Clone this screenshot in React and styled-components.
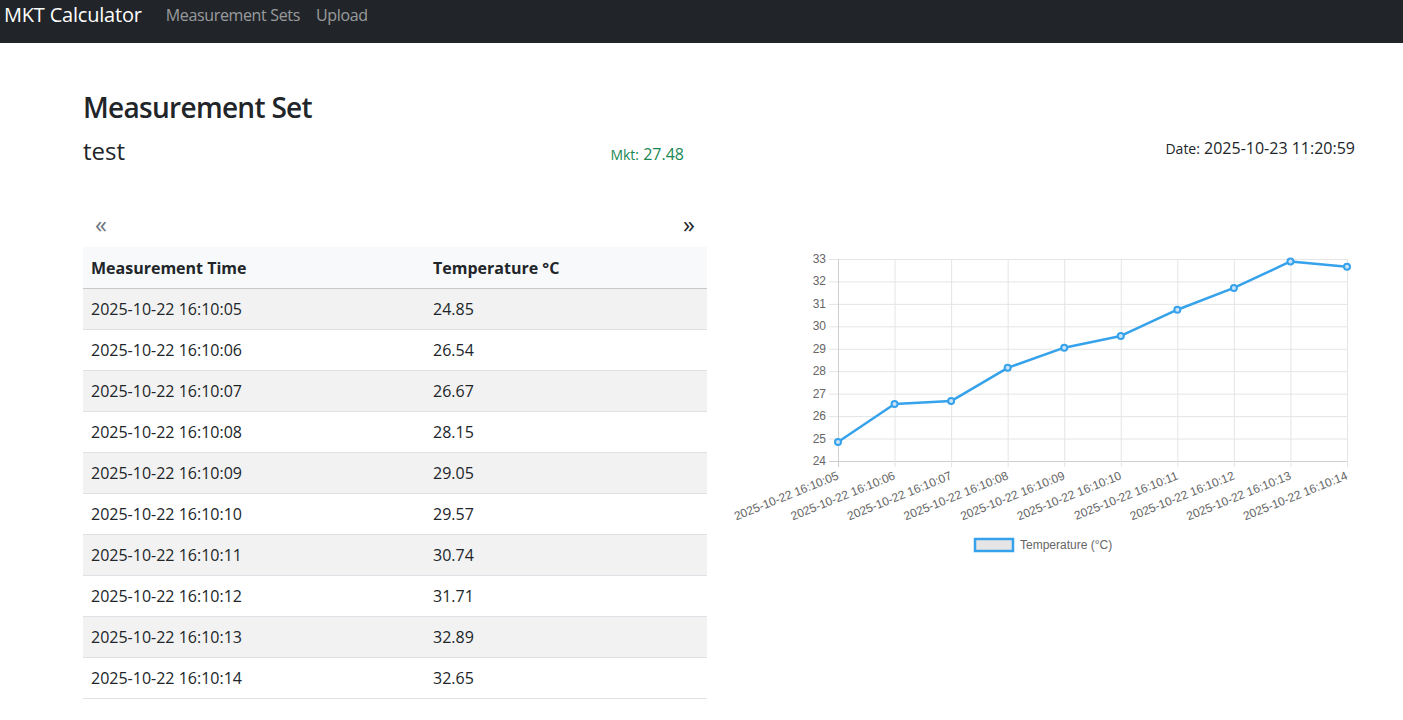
import React from 'react'
import styled, { createGlobalStyle } from 'styled-components'

const rows = [
  ['2025-10-22 16:10:05', 24.85],
  ['2025-10-22 16:10:06', 26.54],
  ['2025-10-22 16:10:07', 26.67],
  ['2025-10-22 16:10:08', 28.15],
  ['2025-10-22 16:10:09', 29.05],
  ['2025-10-22 16:10:10', 29.57],
  ['2025-10-22 16:10:11', 30.74],
  ['2025-10-22 16:10:12', 31.71],
  ['2025-10-22 16:10:13', 32.89],
  ['2025-10-22 16:10:14', 32.65],
]

const GlobalStyle = createGlobalStyle`
  body {
    margin: 0;
    background: #fff;
    color: #212529;
    font-family: 'Open Sans', 'Noto Sans', sans-serif;
    font-size: 16px;
  }
`

// chart geometry, in svg coordinates
const LEFT = 107
const RIGHT = 616
const TOP = 19
const BOTTOM = 221
const MIN = 24
const MAX = 33
const px = (i) => LEFT + (i * (RIGHT - LEFT)) / (rows.length - 1)
const py = (v) => BOTTOM - ((v - MIN) * (BOTTOM - TOP)) / (MAX - MIN)

const Chart = () => {
  const ticks = []
  for (let v = MAX; v >= MIN; v--) ticks.push(v)
  const line = rows.map(([, v], i) => `${px(i)},${py(v)}`).join(' ')
  return (
    <ChartSvg width="624" height="320" viewBox="0 0 624 320">
      {ticks.map((v) => (
        <g key={v}>
          <line
            x1={LEFT - 9}
            x2={RIGHT}
            y1={py(v) + 0.5}
            y2={py(v) + 0.5}
            stroke={v === MIN ? '#cfcfcf' : '#e5e5e5'}
          />
          <text x={95} y={py(v) + 4} textAnchor="end" className="tick">
            {v}
          </text>
        </g>
      ))}
      {rows.map(([t], i) => (
        <g key={t}>
          <line
            x1={px(i) + 0.5}
            x2={px(i) + 0.5}
            y1={TOP}
            y2={BOTTOM + 6}
            stroke={i === 0 ? '#cfcfcf' : '#e5e5e5'}
          />
          <text
            x={px(i)}
            y={BOTTOM + 18}
            textAnchor="end"
            className="tick"
            transform={`rotate(-22 ${px(i)} ${BOTTOM + 14})`}
          >
            {t}
          </text>
        </g>
      ))}
      <polyline points={line} fill="none" stroke="#36a2eb" strokeWidth="2.5" strokeLinejoin="round" />
      {rows.map(([t, v], i) => (
        <circle key={t} cx={px(i)} cy={py(v)} r="3" fill="#c9e4f8" stroke="#36a2eb" strokeWidth="2" />
      ))}
      <rect x="244" y="299" width="38" height="12" fill="#e5e5e5" stroke="#36a2eb" strokeWidth="2.5" />
      <text x="289" y="309" className="tick">Temperature (°C)</text>
    </ChartSvg>
  )
}

const App = () => {
  return (
    <>
      <GlobalStyle />
      <NavBar>
        <Brand>MKT Calculator</Brand>
        <NavLink>Measurement Sets</NavLink>
        <NavLink>Upload</NavLink>
      </NavBar>
      <Main>
        <Title>Measurement Set</Title>
        <InfoRow>
          <InfoHalf>
            <Name>test</Name>
            <Stat $color="#198754">
              <small>Mkt:</small> 27.48
            </Stat>
          </InfoHalf>
          <InfoHalf $end>
            <Stat>
              <small>Date:</small> 2025-10-23 11:20:59
            </Stat>
          </InfoHalf>
        </InfoRow>
        <Columns>
          <div>
            <Pager>
              <PageArrow $disabled>«</PageArrow>
              <PageArrow>»</PageArrow>
            </Pager>
            <Table>
              <thead>
                <tr>
                  <th>Measurement Time</th>
                  <th>Temperature °C</th>
                </tr>
              </thead>
              <tbody>
                {rows.map(([t, v]) => (
                  <tr key={t}>
                    <td>{t}</td>
                    <td>{v.toFixed(2)}</td>
                  </tr>
                ))}
              </tbody>
            </Table>
          </div>
          <ChartWrap>
            <Chart />
          </ChartWrap>
        </Columns>
      </Main>
    </>
  )
}

const NavBar = styled.nav`
  display: flex;
  align-items: flex-start;
  height: 43px;
  padding: 0 4px;
  background: #212529;
  box-sizing: border-box;
`

const Brand = styled.a`
  font-size: 20px;
  line-height: 30px;
  color: #fff;
  margin-right: 16px;
  letter-spacing: -0.2px;
`

const NavLink = styled.a`
  font-size: 16px;
  line-height: 30px;
  padding: 0 8px;
  letter-spacing: -0.35px;
  color: rgba(255, 255, 255, 0.55);
`

const Main = styled.main`
  padding: 0 48px 0 83px;
`

const Title = styled.h3`
  margin: 48px 0 0;
  font-size: 28px;
  font-weight: 600;
  letter-spacing: -0.7px;
  line-height: 1.2;
`

const InfoRow = styled.div`
  display: grid;
  grid-template-columns: 1fr 1fr;
  gap: 24px;
  margin-top: 12px;
`

const InfoHalf = styled.div`
  display: flex;
  align-items: baseline;
  justify-content: ${(p) => (p.$end ? 'flex-end' : 'space-between')};
  padding-right: ${(p) => (p.$end ? '0' : '23px')};
`

const Name = styled.h4`
  margin: 0;
  font-size: 24px;
  font-weight: 400;
  line-height: 1.2;
`

const Stat = styled.span`
  font-size: 16px;
  color: ${(p) => p.$color || '#212529'};
  small {
    font-size: 14px;
  }
`

const Columns = styled.div`
  display: grid;
  grid-template-columns: 1fr 1fr;
  gap: 24px;
  margin-top: 41px;
`

const Pager = styled.div`
  display: flex;
  justify-content: space-between;
  padding: 0 12px;
  height: 36px;
  margin-bottom: 5px;
`

const PageArrow = styled.span`
  font-size: 24px;
  line-height: 36px;
  color: ${(p) => (p.$disabled ? '#6c757d' : '#212529')};
`

const Table = styled.table`
  width: 100%;
  border-collapse: collapse;
  th,
  td {
    text-align: left;
    padding: 0 8px;
    height: 41px;
    box-sizing: border-box;
    border-bottom: 1px solid #dee2e6;
  }
  th {
    font-weight: 700;
    background: #f8f9fa;
    border-bottom: 1px solid #c6c7c8;
  }
  th:first-child {
    width: 342px;
  }
  tbody tr:nth-child(odd) td {
    background: #f2f2f2;
  }
`

const ChartWrap = styled.div`
  padding-top: 34px;
`

const ChartSvg = styled.svg`
  display: block;
  .tick {
    font-family: 'Liberation Sans', Arial, sans-serif;
    font-size: 12px;
    fill: #666;
  }
`

export default App
